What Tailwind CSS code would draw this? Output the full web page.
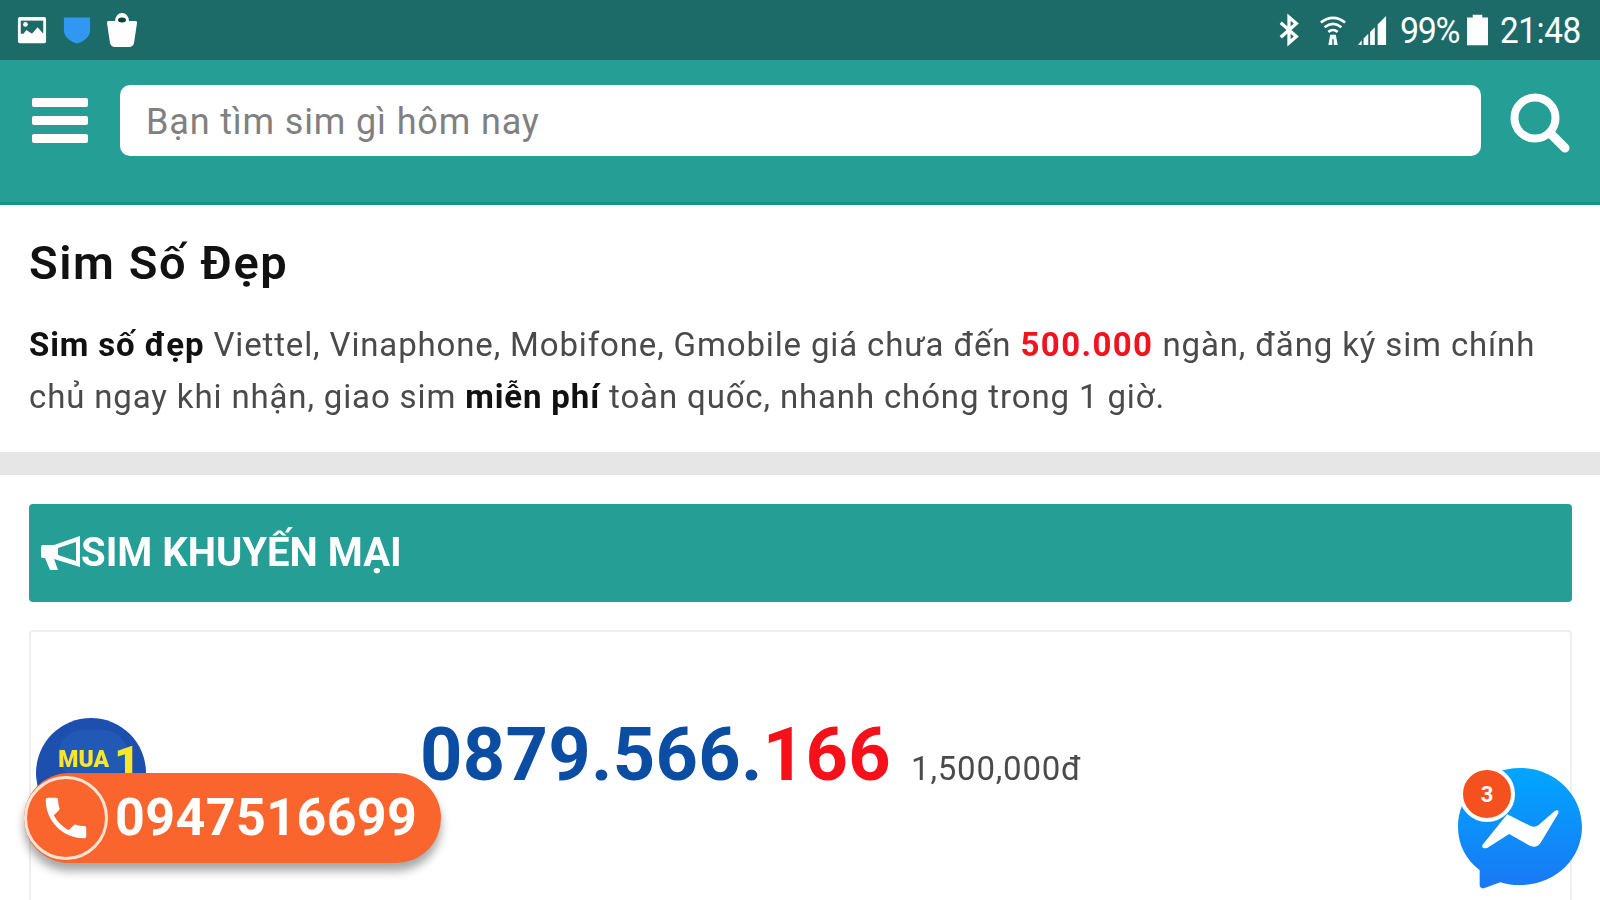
<!DOCTYPE html>
<html lang="en">
<head>
    <meta charset="UTF-8">
    <meta name="viewport" content="width=device-width, initial-scale=1.0">
    <title>Sim Số Đẹp</title>
    <script src="https://cdn.jsdelivr.net/npm/@tailwindcss/browser@4"></script>
</head>
<body class="bg-white overflow-hidden font-['Roboto',sans-serif]">
<div class="relative w-[1600px] h-[900px] overflow-hidden blur-[0.6px]">
    <!-- status bar -->
    <div class="h-[60px] bg-[#1c6b69] flex items-center justify-between pl-[17px] pr-[20px] text-white">
        <div class="flex items-center gap-[16px]">
            <svg width="30" height="30" viewBox="0 0 32 30"><rect x="1" y="1" width="30" height="28" rx="2" fill="#fff"/><rect x="4" y="5" width="24" height="14" fill="#1c6b69"/><circle cx="9" cy="9" r="2.5" fill="#fff"/><path d="M3 24 L10 15 L16 19 L22 12 L29 20 V27 H3Z" fill="#fff"/></svg>
            <svg width="28" height="29" viewBox="0 0 30 30"><path d="M1 1 H29 V15 C29 22 22 27 15 29 C8 27 1 22 1 15Z" fill="#3098f3"/></svg>
            <svg width="30" height="34" viewBox="0 0 30 34"><path d="M15 0 Q9 0 8 8 L1 8 Q0 8 0 10 L3 30 Q4 34 8 34 H22 Q26 34 27 30 L30 10 Q30 8 29 8 L22 8 Q21 0 15 0Z" fill="#fff"/><ellipse cx="15" cy="7" rx="4" ry="2.5" fill="#12403f"/></svg>
        </div>
        <div class="flex items-center">
            <svg class="mr-[19px]" width="22" height="34" viewBox="0 0 24 34"><path d="M3 9 L20 24 L12 31 V3 L20 10 L3 25" fill="none" stroke="#fff" stroke-width="3.6"/></svg>
            <svg class="mr-[10px]" width="28" height="32" viewBox="0 0 30 34"><path d="M2 9 Q15 -1 28 9 M6 14 Q15 7 24 14 M10 19 Q15 15 20 19" fill="none" stroke="#fff" stroke-width="2.8"/><path d="M12 22 H18 L20 33 H15.8 V27 H14.2 V33 H10Z" fill="#fff"/></svg>
            <svg class="mr-[13px]" width="30" height="32" viewBox="0 0 32 34"><path d="M1 33 L5 28 V33Z M7 33 V26 L12 21 V33Z M14 33 V19 L19 14 V33Z M22 33 V11 L31 2 V33Z" fill="#fff"/></svg>
            <span class="w-[60px] mr-[7px] text-[37px] leading-none tracking-[-1.5px] whitespace-nowrap scale-x-[0.92] origin-left">99%</span>
            <svg class="mr-[12px]" width="21" height="32" viewBox="0 0 22 32"><path d="M6 0 H16 V3 H22 V32 H0 V3 H6Z" fill="#fff"/></svg>
            <span class="w-[80px] text-[37px] leading-none tracking-[-0.5px] whitespace-nowrap scale-x-90 origin-left">21:48</span>
        </div>
    </div>

    <!-- search header -->
    <div class="h-[145px] bg-[#259e96] border-b-[3px] border-[#10948b] flex items-start pt-[25px]">
        <div class="w-[120px] pl-[32px] pt-[13px] flex flex-col gap-[9px]">
            <div class="w-[56px] h-[9px] bg-white rounded-[2px]"></div>
            <div class="w-[56px] h-[9px] bg-white rounded-[2px]"></div>
            <div class="w-[56px] h-[9px] bg-white rounded-[2px]"></div>
        </div>
        <div class="w-[1361px] h-[71px] bg-white rounded-[10px] flex items-center pl-[26px] pt-[3px] text-[36px] tracking-[0.85px] text-[#808080]">Bạn tìm sim gì hôm nay</div>
        <svg class="ml-[28px] mt-[7px]" width="62" height="62" viewBox="0 0 62 62"><circle cx="26" cy="26" r="20.5" fill="none" stroke="#fff" stroke-width="8"/><path d="M41 41 L56 56" stroke="#fff" stroke-width="9" stroke-linecap="round"/></svg>
    </div>

    <!-- intro -->
    <div class="h-[247px] px-[29px] pt-[31px]">
        <h1 class="text-[47px] leading-[54px] font-semibold tracking-[1.6px] text-[#111]">Sim Số Đẹp</h1>
        <p class="mt-[29px] text-[33px] leading-[52px] tracking-[0.86px] text-[#4a4a4a]">
            <b class="text-[#111] font-bold">Sim số đẹp</b> Viettel, Vinaphone, Mobifone, Gmobile giá chưa đến <b class="text-[#f0141e] font-bold tracking-[1.4px]">500.000</b> ngàn, đăng ký sim chính chủ ngay khi nhận, giao sim <b class="text-[#111] font-bold">miễn phí</b> toàn quốc, nhanh chóng trong 1 giờ.
        </p>
    </div>
    <div class="h-[23px] bg-[#e6e6e6]"></div>

    <!-- promo section -->
    <div class="pl-[29px] pr-[28px] pt-[29px]">
        <div class="h-[98px] bg-[#259e96] rounded-[4px] flex items-center pl-[11px] text-white text-[40px] font-bold">
            <svg class="shrink-0" width="41" height="38" viewBox="0 0 41 38"><path d="M40 2 L14 11 H3 Q1 11 1 13 V22 Q1 24 3 24 H5 L10 36 H18 L14 25 L40 33Z" fill="#fff"/><path d="M36 8 L18 14 V21 L36 27Z" fill="#259e96"/></svg>
            <span class="whitespace-nowrap">SIM KHUYẾN MẠI</span>
        </div>
        <div class="mt-[28px] h-[300px] border-2 border-[#efefef] rounded-[4px] flex items-start pt-[86px]">
            <div class="w-[389px] pl-[5px]">
                <div class="relative w-[110px] h-[110px] rounded-full bg-[#1d4fae] overflow-hidden flex items-start justify-center pt-[27px] pl-[16px] text-[#f7e62a] font-black text-[23px] leading-[30px]">
                    <div class="absolute left-[22px] top-[12px] w-[70px] h-[50px] rounded-full bg-[#2258b6]"></div>
                    <span class="relative">MUA</span><span class="relative text-[44px] leading-[36px] ml-[5px] font-black">1</span>
                </div>
            </div>
            <div class="mt-[2px] text-[74px] leading-[70px] font-bold tracking-[0.3px] text-[#0b4da2] whitespace-nowrap">0879.566.<span class="text-[#f5101a]">166</span></div>
            <div class="ml-[20px] mt-[29px] text-[33px] leading-[44px] tracking-[0.8px] text-[#4a4a4a]">1,500,000đ</div>
        </div>
    </div>

    <!-- floating call button -->
    <div class="absolute left-[24px] top-[773px] w-[417px] h-[90px] rounded-[45px] bg-[#f9652c] shadow-[0_8px_10px_rgba(0,0,0,0.35)] flex items-center">
        <div class="w-[84px] h-[84px] rounded-full border-[3px] border-[#fde3d6] flex items-center justify-center shrink-0">
            <svg width="54" height="54" viewBox="0 0 24 24"><path fill="#fff" d="M6.6 10.8c1.4 2.8 3.8 5.1 6.6 6.6l2.2-2.2c.3-.3.7-.4 1-.2 1.1.4 2.3.6 3.6.6.6 0 1 .4 1 1V20c0 .6-.4 1-1 1C10.600 21 3 13.400 3 4c0-.6.4-1 1-1h3.500c.6 0 1 .4 1 1 0 1.300.2 2.500.6 3.600.1.300 0 .700-.2 1z"/></svg>
        </div>
        <span class="ml-[7px] text-[52px] font-bold tracking-[0.4px] text-white leading-none">0947516699</span>
    </div>

    <!-- floating messenger button -->
    <div class="absolute left-[1458px] top-[768px] w-[124px] h-[124px]">
        <svg width="124" height="122" viewBox="0 0 126 124">
            <defs><linearGradient id="msg" x1="0" y1="0" x2="0" y2="1"><stop offset="0" stop-color="#00a6ff"/><stop offset="1" stop-color="#1a78f5"/></linearGradient></defs>
            <path fill="url(#msg)" d="M63 0C28 0 0 26 0 60c0 18 8 33 22 44v15c0 3 3 4 5 3l16-6c6 2 13 3 20 3 35 0 63-26 63-59S98 0 63 0z"/>
            <path fill="#fff" d="M25 78 L50 47 L74 59 Q78 61 82 58 L98 44 Q103 41 102 46 L84 76 Q80 82 73 79 L52 67 L30 81 Q23 83 25 78z"/>
        </svg>
        <div class="absolute left-[1px] top-[-2px] w-[56px] h-[56px] rounded-full bg-[#f5511e] border-[4px] border-white flex items-center justify-center text-white font-bold text-[22px]">3</div>
    </div>
</div>
</body>
</html>
